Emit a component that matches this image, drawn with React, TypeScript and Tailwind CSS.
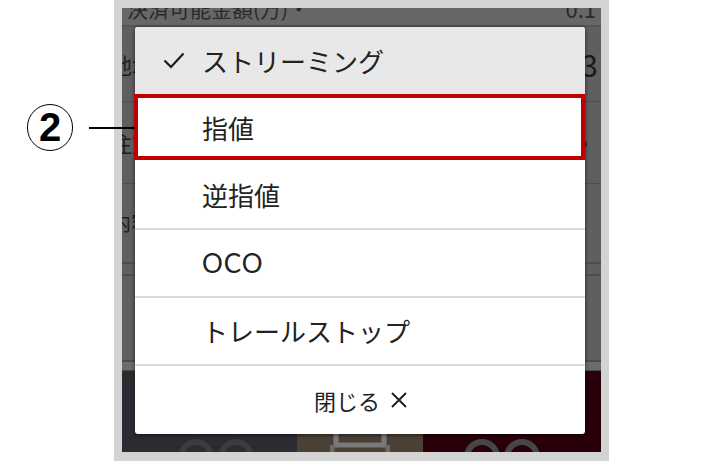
import React from "react";

const jp = { fontFamily: '"Noto Sans CJK JP", "Noto Sans", sans-serif' };

function Check() {
  return (
    <svg width="22" height="17" viewBox="0 0 22 17" className="shrink-0">
      <path d="M1.5 8.5 L8 15 L20.5 1.5" fill="none" stroke="#1a1a1a" strokeWidth="2.2" />
    </svg>
  );
}

function Circles({ color }: { color: string }) {
  return (
    <svg width="76" height="40" viewBox="0 0 76 40">
      <circle cx="18" cy="20" r="15" fill="none" stroke={color} strokeWidth="6" />
      <circle cx="58" cy="20" r="15" fill="none" stroke={color} strokeWidth="6" />
    </svg>
  );
}

function Plug() {
  return (
    <svg width="60" height="40" viewBox="0 0 60 40">
      <path d="M6 0 V14 H54 V0" fill="none" stroke="#7a7a7a" strokeWidth="5" />
      <path d="M2 14 V40 M58 14 V40" fill="none" stroke="#6a6a6a" strokeWidth="5" />
    </svg>
  );
}

export default function App() {
  return (
    <div className="relative w-[720px] h-[461px] bg-white overflow-hidden" style={jp}>
      {/* annotation */}
      <div className="absolute left-[27px] top-[104px] w-[46px] h-[47px] rounded-full border-[1.5px] border-black flex items-center justify-center">
        <span
          className="text-[40px] font-black leading-none text-black -mt-[1px]"
          style={{ fontFamily: '"Liberation Sans", Arial, sans-serif' }}
        >
          2
        </span>
      </div>
      <div className="absolute left-[89px] top-[127px] w-[46px] h-[2px] bg-black z-20" />

      <div className="ml-[114px] w-[495px] h-[461px] bg-[#d3d3d3] pt-[8px] px-[8px] pb-[9px]">
        <div className="relative w-full h-full overflow-hidden bg-[#5f5f5f] flex flex-col text-[#1e1e1e]">
          {/* background app (dimmed) */}
          <div className="shrink-0 h-[19px] bg-[#676767] flex items-end justify-between px-[5px] overflow-hidden border-b-2 border-[#555555]">
            <span className="text-[21px] leading-none translate-y-[-6px] text-[#2a2a2a]">決済可能金額(万)・</span>
            <span className="text-[22px] leading-none translate-y-[-6px] text-[#2a2a2a]">0.1</span>
          </div>
          <div className="shrink-0 h-[75px] flex items-center justify-between border-b border-[#4e4e4e] pr-[3px]">
            <span className="text-[22px] -ml-[12px]">地域</span>
            <span className="text-[30px] text-[#1a1a1a]">3</span>
          </div>
          <div className="shrink-0 h-[82px] flex items-center justify-between border-b border-[#4e4e4e] pr-[1px]">
            <span className="text-[22px] -ml-[12px]">注文</span>
            <span className="text-[22px] text-[#222]">〉</span>
          </div>
          <div className="shrink-0 h-[80px] flex items-center border-b-2 border-[#4e4e4e]">
            <span className="text-[20px] -ml-[11px]">内容</span>
          </div>
          <div className="shrink-0 h-[12px] border-b-2 border-[#4e4e4e]" />
          <div className="shrink-0 h-[86px] border-b-2 border-[#4a4a4a]" />
          <div className="shrink-0 h-[9px] bg-[#6c6c6c] border-b border-[#4a4a4a]" />
          <div className="flex-1 min-h-0 flex overflow-hidden">
            <div className="w-[175px] bg-[#2b2c32] flex justify-center pt-[66px] pl-[12px]">
              <Circles color="#3b3c42" />
            </div>
            <div className="w-[126px] bg-[#4a4035] flex justify-center pt-[60px]">
              <Plug />
            </div>
            <div className="flex-1 bg-[#29000a] flex justify-center pt-[66px] pr-[20px]">
              <Circles color="#464646" />
            </div>
          </div>

          {/* dialog */}
          <div className="absolute left-[13px] top-[19px] w-[450px] h-[407px] bg-white rounded-[3px] overflow-hidden shadow-[0_1px_4px_rgba(0,0,0,0.6)] flex flex-col text-[#222]">
            <div className="shrink-0 h-[67px] bg-[#e8e8e8] flex items-center pl-[28px]">
              <Check />
              <span className="ml-[17px] text-[26px] leading-none">ストリーミング</span>
            </div>
            <div className="shrink-0 h-[67px] flex items-center pl-[67px]">
              <span className="text-[26px] leading-none">指値</span>
            </div>
            <div className="shrink-0 h-[69px] flex items-center pl-[67px] border-b-2 border-[#dadada]">
              <span className="text-[26px] leading-none">逆指値</span>
            </div>
            <div className="shrink-0 h-[68px] flex items-center pl-[67px] border-b-2 border-[#dadada]">
              <span className="text-[26px] leading-none tracking-[1px]" style={{ fontFamily: 'Lato, "Noto Sans", sans-serif' }}>
                OCO
              </span>
            </div>
            <div className="shrink-0 h-[68px] flex items-center pl-[67px] border-b-2 border-[#dadada]">
              <span className="text-[26px] leading-none">トレールストップ</span>
            </div>
            <div className="flex-1 flex items-center justify-center pl-[2px]">
              <span className="text-[22px] leading-none text-[#222]">閉じる</span>
              <svg width="18" height="18" viewBox="0 0 18 18" className="ml-[10px]">
                <path d="M2 2 L16 16 M16 2 L2 16" stroke="#222" strokeWidth="2" />
              </svg>
            </div>
          </div>

          {/* highlight */}
          <div className="absolute left-[12px] top-[86px] w-[451px] h-[66px] border-[4px] border-[#c00000]" />
        </div>
      </div>
    </div>
  );
}
